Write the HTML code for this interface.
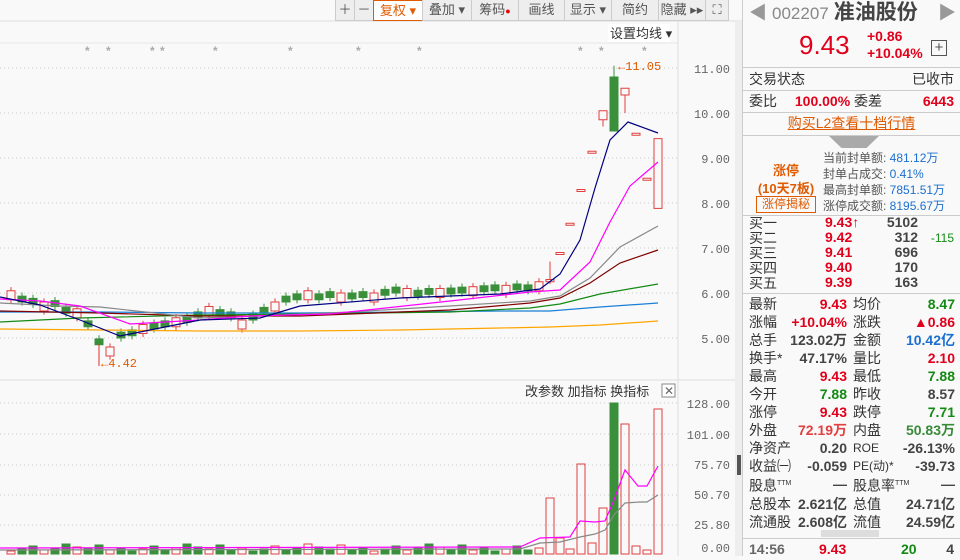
<!DOCTYPE html>
<html><head><meta charset="utf-8"><style>
*{margin:0;padding:0;box-sizing:border-box}
body{width:960px;height:556px;overflow:hidden;background:#f9f9f9;font-family:"Liberation Sans","Noto Sans CJK SC",sans-serif;position:relative}
.tb{position:absolute;top:0;left:336px;height:21px;display:flex;border-bottom:1px solid #ccc}
.tb div{height:21px;border:1px solid #ccc;border-top:0;margin-left:-1px;background:#eee;color:#555;font-size:13px;line-height:20px;text-align:center}
#rp{position:absolute;left:742px;top:0;width:218px;height:556px;background:#f9f9f9;border-left:1px solid #ccc;font-size:14px;color:#333}
.row{position:absolute;left:6px;right:6px;height:22px;line-height:22px}
.r{color:#e0001b}.g{color:#138a13}.b{color:#1b6fd0}
.hr{position:absolute;left:0;right:0;height:1px;background:#ccc}
.q{position:absolute;font-size:14px;line-height:18px;font-weight:bold}
</style></head><body>
<svg width="742" height="556" style="position:absolute;left:0;top:0">
<line x1="0" y1="21" x2="742" y2="21" stroke="#ddd"/>
<line x1="0" y1="43" x2="678" y2="43" stroke="#e6e6e6"/>
<line x1="678" y1="21" x2="678" y2="556" stroke="#ddd"/>
<line x1="0" y1="380" x2="735" y2="380" stroke="#ddd"/>
<rect x="735" y="21" width="7" height="535" fill="#eee"/>
<rect x="737" y="455" width="4" height="20" fill="#555"/>
<g stroke="#ccc" stroke-dasharray="1,3">
<line x1="0" y1="68" x2="678" y2="68"/><line x1="0" y1="113" x2="678" y2="113"/><line x1="0" y1="158" x2="678" y2="158"/><line x1="0" y1="203" x2="678" y2="203"/><line x1="0" y1="248" x2="678" y2="248"/><line x1="0" y1="293" x2="678" y2="293"/><line x1="0" y1="338" x2="678" y2="338"/>
<line x1="0" y1="403" x2="678" y2="403"/><line x1="0" y1="434" x2="678" y2="434"/><line x1="0" y1="465" x2="678" y2="465"/><line x1="0" y1="495" x2="678" y2="495"/><line x1="0" y1="525" x2="678" y2="525"/>
</g>
<g font-family="Liberation Mono" font-size="12" fill="#666" text-anchor="end">
<text x="730" y="73">11.00</text><text x="730" y="118">10.00</text><text x="730" y="163">9.00</text><text x="730" y="208">8.00</text><text x="730" y="253">7.00</text><text x="730" y="298">6.00</text><text x="730" y="343">5.00</text>
<text x="730" y="408">128.00</text><text x="730" y="439">101.00</text><text x="730" y="469">75.70</text><text x="730" y="499">50.70</text><text x="730" y="529">25.80</text><text x="730" y="552">0.00</text>
</g>
<g fill="#aaa" font-size="12" font-weight="bold"><text x="85" y="55">*</text><text x="106" y="55">*</text><text x="150" y="55">*</text><text x="160" y="55">*</text><text x="213" y="55">*</text><text x="288" y="55">*</text><text x="356" y="55">*</text><text x="417" y="55">*</text><text x="578" y="55">*</text><text x="599" y="55">*</text><text x="642" y="55">*</text></g>
<rect x="608" y="24" width="62" height="18" fill="#fff"/>
<text x="610" y="38" font-size="13" fill="#333">设置均线 ▾</text>
<g id="c"></g>
<g fill="none" stroke-width="1.2">
<polyline stroke="#ffa500" points="0,329 100,330 200,331 300,331 400,330 500,328 550,327 600,325 658,321"/>
<polyline stroke="#1a7fd6" points="0,312 100,312 200,313 300,313 400,312 500,311 550,311 600,307 658,303"/>
<polyline stroke="#138a13" points="0,322 80,318 200,315 300,314 450,312 530,308 560,304 600,294 658,284"/>
<polyline stroke="#800000" points="0,311 100,313 200,316 300,316 450,310 530,303 560,298 590,283 620,263 658,250"/>
<polyline stroke="#888" points="0,303 60,306 100,307 200,318 260,316 350,312 450,306 530,301 560,296 590,278 620,247 658,226"/>
<polyline stroke="#f0f" points="0,299 40,301 80,306 130,324 200,320 250,316 330,314 450,301 530,292 560,290 590,262 610,222 630,186 658,162"/>
<polyline stroke="#000080" points="0,297 40,305 80,320 120,336 160,328 200,320 260,318 300,306 400,298 500,294 540,289 560,274 580,240 595,188 610,140 628,122 658,133"/>
</g>
<line x1="99" y1="344" x2="99" y2="366" stroke="#e03030"/>
<text x="101" y="367" font-size="12" fill="#e05a00" font-family="Liberation Mono">←4.42</text>
<text x="618" y="70" font-size="12" fill="#e05a00" font-family="Liberation Mono">←11.05</text>
<g id="v"></g>
<g fill="none" stroke-width="1.2">
<polyline stroke="#888" points="0,550 520,549 540,543 560,542 580,537 595,534 605,530 614,515 625,503 640,502 647,502 658,495"/>
<polyline stroke="#f0f" points="0,548 520,547 540,538 570,537 580,521 595,522 605,521 614,500 625,470 638,486 647,486 658,466"/>
</g>
<text x="525" y="396" font-size="13" fill="#333">改参数  加指标  换指标</text>
<rect x="662" y="384" width="13" height="13" fill="#fff" stroke="#888"/><text x="664" y="395" font-size="12" fill="#666">✕</text>
</svg>
<div class="tb">
<div style="width:20px">＋</div><div style="width:20px">－</div>
<div style="width:50px;border:1px solid #e05a00;color:#e05a00;background:#fff">复权 ▾</div>
<div style="width:50px">叠加 ▾</div><div style="width:48px">筹码<span style="color:#e00;font-size:9px">●</span></div>
<div style="width:47px">画线</div><div style="width:48px">显示 ▾</div><div style="width:48px">简约</div><div style="width:48px">隐藏 ▸▸</div><div style="width:24px">⛶</div>
</div>
<div id="rp">
<div class="row" style="top:2px;font-size:18px;height:26px"><span style="color:#999">◀</span> <span style="color:#888;font-size:17px">002207</span> <b style="font-size:21px;color:#444">准油股份</b><span style="position:absolute;right:-2px;color:#999">▶</span></div>
<div style="position:absolute;left:56px;top:30px;font-size:26px;color:#e0001b">9.43</div>
<div style="position:absolute;left:124px;top:28px;font-size:14px;font-weight:bold;color:#e0001b;line-height:17px">+0.86<br>+10.04%</div>
<div style="position:absolute;left:188px;top:40px;width:16px;height:16px;border:1px solid #555;text-align:center;line-height:14px;font-size:15px;color:#555">+</div>
<div class="hr" style="top:67px"></div>
<div class="row" style="top:68px">交易状态<span style="float:right">已收市</span></div>
<div class="hr" style="top:90px"></div>
<div class="row" style="top:90px">委比 <b class="r" style="margin-left:14px">100.00%</b> 委差<b class="r" style="float:right">6443</b></div>
<div class="hr" style="top:112px"></div>
<div class="row" style="top:112px;text-align:center;color:#e05a00;text-decoration:underline">购买L2查看十档行情</div>
<div class="hr" style="top:135px"></div>
<div style="position:absolute;left:86px;top:136px;width:50px;height:12px;background:#aaa;clip-path:polygon(0 0,100% 0,75% 100%,25% 100%)"></div>
<div style="position:absolute;left:8px;top:162px;width:70px;text-align:center;color:#e05a00;font-weight:bold;font-size:13px;line-height:18px">涨停<br>(10天7板)</div>
<div style="position:absolute;left:13px;top:196px;width:60px;height:17px;border:1px solid #e05a00;color:#e05a00;font-size:12px;text-align:center;line-height:15px">涨停揭秘</div>
<div style="position:absolute;left:80px;top:150px;font-size:12px;color:#555;line-height:16px">当前封单额: <span class="b">481.12万</span><br>封单占成交: <span class="b">0.41%</span><br>最高封单额: <span class="b">7851.51万</span><br>涨停成交额: <span class="b">8195.67万</span></div>
<div class="hr" style="top:215px"></div>
<div style="position:absolute;left:6px;top:216px;line-height:15px;font-size:14px">买一<br>买二<br>买三<br>买四<br>买五</div>
<div class="q r" style="left:82px;top:215px;line-height:15px">9.43↑<br>9.42<br>9.41<br>9.40<br>9.39</div>
<div class="q" style="right:42px;top:215px;line-height:15px;text-align:right;color:#444">5102<br>312<br>696<br>170<br>163</div>
<div style="position:absolute;right:6px;top:231px;font-size:12px;color:#138a13">-115</div>
<div class="hr" style="top:293px"></div>
<div style="position:absolute;left:6px;top:295px;font-size:14px;line-height:18px;width:206px">
<div>最新<b class="r" style="position:absolute;right:108px">9.43</b><span style="position:absolute;left:104px">均价</span><b class="g" style="position:absolute;right:0">8.47</b></div>
<div>涨幅<b class="r" style="position:absolute;right:108px">+10.04%</b><span style="position:absolute;left:104px">涨跌</span><b class="r" style="position:absolute;right:0">▲0.86</b></div>
<div>总手<b style="position:absolute;right:108px;color:#444">123.02万</b><span style="position:absolute;left:104px">金额</span><b class="b" style="position:absolute;right:0">10.42亿</b></div>
<div>换手*<b style="position:absolute;right:108px;color:#444">47.17%</b><span style="position:absolute;left:104px">量比</span><b class="r" style="position:absolute;right:0">2.10</b></div>
<div>最高<b class="r" style="position:absolute;right:108px">9.43</b><span style="position:absolute;left:104px">最低</span><b class="g" style="position:absolute;right:0">7.88</b></div>
<div>今开<b class="g" style="position:absolute;right:108px">7.88</b><span style="position:absolute;left:104px">昨收</span><b style="position:absolute;right:0;color:#444">8.57</b></div>
<div>涨停<b class="r" style="position:absolute;right:108px">9.43</b><span style="position:absolute;left:104px">跌停</span><b class="g" style="position:absolute;right:0">7.71</b></div>
<div>外盘<b style="position:absolute;right:108px;color:#e04040">72.19万</b><span style="position:absolute;left:104px">内盘</span><b style="position:absolute;right:0;color:#3a8a3a">50.83万</b></div>
<div>净资产<b style="position:absolute;right:108px;color:#444">0.20</b><span style="position:absolute;left:104px;font-size:12px">ROE</span><b style="position:absolute;right:0;color:#444">-26.13%</b></div>
<div>收益㈠<b style="position:absolute;right:108px;color:#444">-0.059</b><span style="position:absolute;left:104px;font-size:12px">PE(动)*</span><b style="position:absolute;right:0;color:#444">-39.73</b></div>
<div>股息<sup style="font-size:7px">TTM</sup><b style="position:absolute;right:108px;color:#444">—</b><span style="position:absolute;left:104px">股息率<sup style="font-size:7px">TTM</sup></span><b style="position:absolute;right:0;color:#444">—</b></div>
<div>总股本<b style="position:absolute;right:108px;color:#444">2.621亿</b><span style="position:absolute;left:104px">总值</span><b style="position:absolute;right:0;color:#444">24.71亿</b></div>
<div>流通股<b style="position:absolute;right:108px;color:#444">2.608亿</b><span style="position:absolute;left:104px">流值</span><b style="position:absolute;right:0;color:#444">24.59亿</b></div>
</div>
<div style="position:absolute;left:78px;top:530px;width:58px;height:7px;background:#ddd"></div>
<div class="hr" style="top:538px"></div>
<div class="row" style="top:538px;font-weight:bold;font-size:14px"><span style="color:#666">14:56</span><span class="r" style="position:absolute;left:70px">9.43</span><span class="g" style="position:absolute;left:152px">20</span><span style="position:absolute;right:0;color:#444">4</span></div>
</div>
<script>
var ns="http://www.w3.org/2000/svg",c=document.getElementById("c"),v=document.getElementById("v");
function Y(p){return 68+(11-p)*45}
function el(g,t,a){var e=document.createElementNS(ns,t);for(var k in a)e.setAttribute(k,a[k]);g.appendChild(e)}
var d=[];var base=[5.95,5.85,5.8,5.7,5.75,5.6,5.55,5.3,4.9,4.7,5.05,5.1,5.2,5.25,5.3,5.35,5.4,5.5,5.6,5.55,5.5,5.3,5.45,5.6,5.7,5.85,5.9,5.95,5.9,5.95,5.9,5.92,5.95,5.9,6.0,6.05,6.0,5.98,6.02,6.0,6.03,6.05,6.04,6.08,6.1,6.07,6.12,6.1,6.15];
for(var i=0;i<base.length;i++){var x=550-11*(base.length-i),o=base[i]+(i%3?0.08:-0.1),cl=base[i]-(i%3?0.05:-0.1);d.push([x,o,cl,Math.max(o,cl)+0.08,Math.min(o,cl)-0.08])}
d.push([550,6.25,6.3,6.7,6.2],[560,6.9,6.9,6.9,6.9],[570,7.55,7.55,7.55,7.55],[581,8.3,8.3,8.3,8.3],[592,9.15,9.15,9.15,9.15],[603,9.85,10.05,10.05,9.7],[614,10.8,9.6,11.05,9.6],[625,10.4,10.55,10.55,10.0],[636,9.55,9.55,9.55,9.55],[647,8.55,8.55,8.55,8.55],[658,7.88,9.43,9.43,7.88]);
d.forEach(function(k,i){var x=k[0],up=k[2]>=k[1],col=up?"#e04040":"#3a8f3a";
el(c,"line",{x1:x,x2:x,y1:Y(k[3]),y2:Y(k[4]),stroke:col});
var t=Y(Math.max(k[1],k[2])),b=Y(Math.min(k[1],k[2]));if(b-t<2)b=t+2;
el(c,"rect",{x:x-4,y:t,width:8,height:b-t,fill:up?"#f9f9f9":col,stroke:col});
var h=[3,5,8,4,6,10,7,5,9,4,6][i%11];
if(x==614)h=151;else if(x==625)h=130;else if(x==658)h=145;else if(x==581)h=90;else if(x==548||x==550)h=56;else if(x==603)h=46;else if(x==592)h=11;else if(x==570)h=5;else if(x==560)h=16;else if(x==647)h=4;else if(x==636)h=8;
el(v,"rect",{x:x-4,y:554-h,width:8,height:h,fill:up?"none":col,stroke:col});
});
</script>
</body></html>
